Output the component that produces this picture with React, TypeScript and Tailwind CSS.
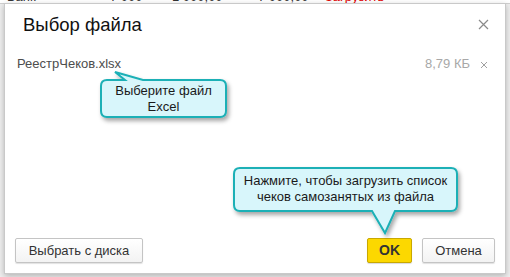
import React from 'react';

const font = { fontFamily: '"Liberation Sans", Arial, sans-serif' };

function Callout({
  width,
  height,
  tail,
  children,
  className,
}: {
  width: number;
  height: number;
  tail: 'top' | 'bottom';
  children: React.ReactNode;
  className: string;
}) {
  // bubble body with a pointer, drawn in svg; text laid over it
  const w = width;
  const h = height;
  const r = 6;
  const pad = 14;
  let d = '';
  if (tail === 'top') {
    d = `M ${r + 1} ${pad} L 25 ${pad} L 15 ${pad - 8} L 43 ${pad} L ${w - r - 1} ${pad} Q ${w - 1} ${pad} ${w - 1} ${pad + r} L ${w - 1} ${h - r - 1} Q ${w - 1} ${h - 1} ${w - r - 1} ${h - 1} L ${r + 1} ${h - 1} Q 1 ${h - 1} 1 ${h - r - 1} L 1 ${pad + r} Q 1 ${pad} ${r + 1} ${pad} Z`;
  } else {
    const b = h - pad;
    d = `M ${r + 1} 1 L ${w - r - 1} 1 Q ${w - 1} 1 ${w - 1} ${r + 1} L ${w - 1} ${b - r} Q ${w - 1} ${b} ${w - r - 1} ${b} L 162 ${b} L 152 ${b + 22} L 139 ${b} L ${r + 1} ${b} Q 1 ${b} 1 ${b - r} L 1 ${r + 1} Q 1 1 ${r + 1} 1 Z`;
  }
  return (
    <div className={`absolute ${className}`} style={{ width: w, height: h + 10 }}>
      <svg width={w + 8} height={h + 12} className="absolute left-0 top-0 overflow-visible">
        <defs>
          <filter id={`sh-${tail}`} x="-10%" y="-10%" width="130%" height="140%">
            <feDropShadow dx="2" dy="3" stdDeviation="2" floodColor="#000" floodOpacity="0.35" />
          </filter>
        </defs>
        <path d={d} fill="#d8f6fb" stroke="#1bb0b6" strokeWidth="2" filter={`url(#sh-${tail})`} />
      </svg>
      <div
        className={`absolute left-0 flex w-full flex-col items-center text-[13px] leading-[16px] text-[#1a1a1a] ${
          tail === 'top' ? 'top-[17px]' : 'top-[6px]'
        }`}
      >
        {children}
      </div>
    </div>
  );
}

export default function App() {
  return (
    <div className="relative h-[277px] w-[510px] overflow-hidden bg-[#efefef]" style={font}>
      {/* list behind the dialog, only the lower edge shows */}
      <div className="absolute left-0 top-[-9px] flex h-[13px] w-full items-end border-b border-[#d0d0d0] bg-white text-[13px] leading-[13px] text-[#333]">
        <span className="ml-[7px] w-[103px]">Банк</span>
        <span className="w-[62px]">7 000</span>
        <span className="w-[86px]">1 000,00</span>
        <span className="w-[67px]">7 000,00</span>
        <span className="text-[#e00000]">Загрузить</span>
      </div>

      <div className="absolute left-[4px] top-[3px] flex h-[271px] w-[502px] flex-col border border-[#c9c9c9] bg-white shadow-[0_2px_6px_rgba(0,0,0,0.25)]">
        <div className="flex h-[44px] items-center justify-between pb-[3px] pl-[18px] pr-[16px]">
          <span className="text-[18.5px] text-[#111]">Выбор файла</span>
          <svg width="11" height="11" viewBox="0 0 11 11">
            <path d="M1 1 L10 10 M10 1 L1 10" stroke="#8a8a8a" strokeWidth="1.2" />
          </svg>
        </div>

        <div className="flex items-center pl-[12px] pr-[17px] pt-[6px] text-[13px]">
          <span className="text-[#4d4d4d]">РеестрЧеков.xlsx</span>
          <span className="ml-auto text-[#a8a8a8]">8,79 КБ</span>
          <svg width="8" height="8" viewBox="0 0 8 8" className="ml-[10px] mt-[2px]">
            <path d="M1 1 L7 7 M7 1 L1 7" stroke="#a0a0a0" strokeWidth="1" />
          </svg>
        </div>

        <div className="mt-auto flex items-center gap-[10px] px-[10px] pb-[10px]">
          <button className="h-[25px] w-[128px] rounded-[2px] border border-[#c4c4c4] bg-gradient-to-b from-white to-[#f3f3f3] text-[13px] text-[#333] shadow-[0_1px_1px_rgba(0,0,0,0.12)]">
            Выбрать с диска
          </button>
          <button className="ml-auto h-[25px] w-[45px] rounded-[2px] border border-[#c9a800] bg-[#fcd800] text-[14px] font-bold text-[#333] shadow-[0_1px_1px_rgba(0,0,0,0.15)]">
            OK
          </button>
          <button className="h-[25px] w-[73px] rounded-[2px] border border-[#c4c4c4] bg-gradient-to-b from-white to-[#f3f3f3] text-[13px] text-[#333] shadow-[0_1px_1px_rgba(0,0,0,0.12)]">
            Отмена
          </button>
        </div>
      </div>

      <Callout width={127} height={52} tail="top" className="left-[100px] top-[66px]">
        <span>Выберите файл</span>
        <span>Excel</span>
      </Callout>

      <Callout width={225} height={58} tail="bottom" className="left-[233px] top-[167px]">
        <span>Нажмите, чтобы загрузить список</span>
        <span>чеков самозанятых из файла</span>
      </Callout>
    </div>
  );
}
